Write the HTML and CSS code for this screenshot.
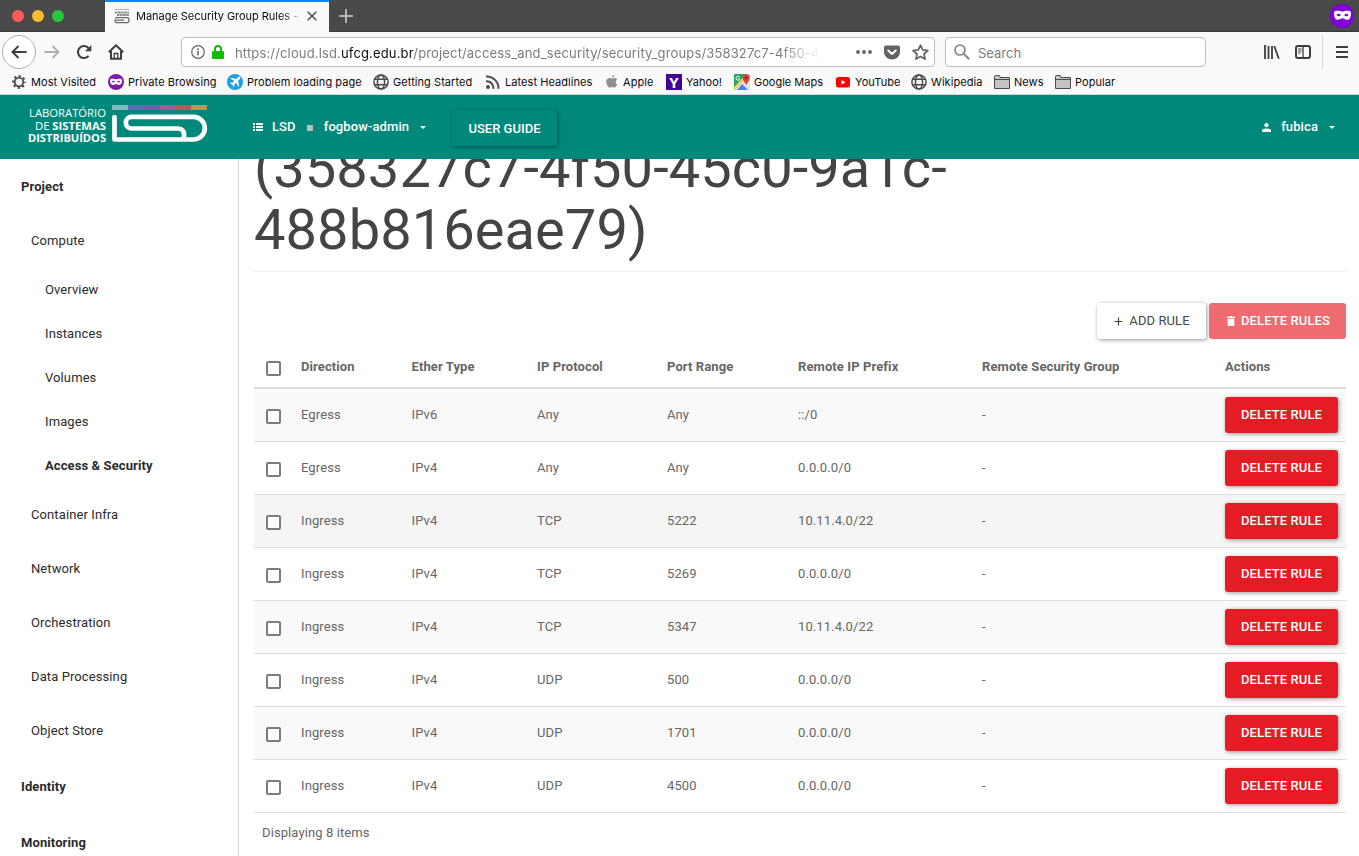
FILE: index.html
```html
<!DOCTYPE html>
<html lang="en">
<head>
<meta charset="utf-8">
<title>Manage Security Group Rules</title>
<link rel="stylesheet" href="styles.css">
</head>
<body>
<svg class="defs" width="0" height="0">
  <defs>
    <symbol id="mask" viewBox="0 0 16 16"><path fill="#fff" fill-rule="evenodd" d="M0 5.800C0 4 1.200 3.500 3.400 3.500 5.500 3.500 6.500 4.200 8 4.200S10.500 3.500 12.600 3.500C14.800 3.500 16 4 16 5.800 16 9.800 14.500 12 12.300 12 10.200 12 9.500 10.500 8 10.500S5.800 12 3.700 12C1.500 12 0 9.800 0 5.800zM2.300 7.500Q4.500 9.700 6.500 7.500 4.300 5.300 2.300 7.500zM9.500 7.500Q11.700 9.700 13.700 7.500 11.500 5.300 9.500 7.500z"/></symbol>
    <symbol id="globe" viewBox="0 0 16 16"><g fill="none" stroke="#4a4a4f" stroke-width="1.500"><circle cx="8" cy="8" r="7.100"/><ellipse cx="8" cy="8" rx="3.600" ry="7.100"/><path d="M1.500 5.300h13M1.500 10.700h13"/></g></symbol>
    <symbol id="folder" viewBox="0 0 16 14"><path d="M.5 13.500V1.500q0-1 1-1h3.500q1 0 1 2h9.500v11z" fill="#c4c4c4" stroke="#4a4a4f"/><path d="M.5 4.500h15" stroke="#4a4a4f"/></symbol>
  </defs>
</svg>
<div class="browser">
  <div class="tabs">
    <div class="lights"><i class="red"></i><i class="yellow"></i><i class="green"></i></div>
    <div class="tab">
      <svg width="16" height="16" viewBox="0 0 16 16"><g fill="none" stroke="#a0a0a0"><path d="M1 1.500h14" stroke-dasharray="2 .5"/><path d="M1 4.500h14M3 7h12" stroke-width="2" stroke-dasharray="2.500 .6" stroke="#8a8a8a"/><path d="M1 9.700h12q2 0 2 2.500t-2 2.500H3q-2 0-2-2.500h9" stroke="#6a6a6a" stroke-width="1.200"/></g></svg>
      <span class="tab-title">Manage Security Group Rules -</span>
      <svg width="10" height="10" viewBox="0 0 10 10"><path d="M.7.7l8.600 8.600M9.300.7L.7 9.300" stroke="#4a4a4f" stroke-width="1.400"/></svg>
    </div>
    <svg class="newtab" width="14" height="14" viewBox="0 0 14 14"><path d="M7 0v14M0 7h14" stroke="#d0d0d0" stroke-width="1.600"/></svg>
    <span class="private"><svg width="17" height="17"><use href="#mask"/></svg></span>
  </div>
  <div class="nav">
    <span class="back"><svg width="16" height="14" viewBox="0 0 16 14"><path d="M7.500 1L1.500 7l6 6M1.500 7H15.500" fill="none" stroke="#3e3e42" stroke-width="2"/></svg></span>
    <svg class="fwd" width="16" height="14" viewBox="0 0 16 14"><path d="M8.500 1l6 6-6 6M14.500 7H.5" fill="none" stroke="#b0b0b0" stroke-width="1.800"/></svg>
    <svg class="reload" width="16" height="16" viewBox="0 0 16 16"><path d="M12.600 11.800A6 6 0 1 1 12.500 4.100" fill="none" stroke="#3e3e42" stroke-width="2.100"/><path d="M15.300 1v6.300H9z" fill="#3e3e42"/></svg>
    <svg class="home" width="16" height="16" viewBox="0 0 16 16"><path d="M.7 8.300L8 1.300l7.300 7M3 7v7.700h10V7" fill="none" stroke="#3e3e42" stroke-width="2"/><path d="M6.200 14V9.500h3.600V14" fill="none" stroke="#3e3e42" stroke-width="1.300"/></svg>
    <div class="field url">
      <svg class="info" width="14" height="14" viewBox="0 0 14 14"><circle cx="7" cy="7" r="6.300" fill="none" stroke="#666" stroke-width="1.200"/><path d="M7 6v4.500M7 3.200v1.700" stroke="#666" stroke-width="1.600"/></svg>
      <svg class="lock" width="12" height="14" viewBox="0 0 12 14"><rect y="6" width="12" height="8" rx="1.200" fill="#12bc00"/><path d="M3 7V4a3 3 0 0 1 6 0v3" fill="none" stroke="#12bc00" stroke-width="2"/></svg>
      <span class="address">https://cloud.lsd.<b>ufcg.edu.br</b>/project/access_and_security/security_groups/358327c7-4f50-4</span>
      <svg class="dots" width="16" height="4" viewBox="0 0 16 4"><g fill="#636366"><circle cx="2" cy="2" r="1.900"/><circle cx="8" cy="2" r="1.900"/><circle cx="14" cy="2" r="1.900"/></g></svg>
      <svg class="pocket" width="16" height="15" viewBox="0 0 16 15"><path d="M2 .5h12q2 0 2 2V7a8 7.600 0 0 1-16 0V2.500q0-2 2-2z" fill="#636366"/><path d="M4.300 5.500L8 9l3.700-3.500" fill="none" stroke="#fff" stroke-width="2" stroke-linecap="round" stroke-linejoin="round"/></svg>
      <svg class="star" width="17" height="16" viewBox="0 0 17 16"><path d="M8.500 1.200l2.200 4.700 5.200.6-3.900 3.500 1.100 5.100-4.600-2.600-4.600 2.600L5 10 1.100 6.500l5.200-.6z" fill="none" stroke="#636366" stroke-width="1.700" stroke-linejoin="round"/></svg>
    </div>
    <div class="field search">
      <svg width="16" height="16" viewBox="0 0 16 16"><circle cx="6" cy="6" r="5" fill="none" stroke="#858585" stroke-width="1.700"/><path d="M9.600 9.600l5.600 5.600" stroke="#858585" stroke-width="2"/></svg>
      <span>Search</span>
    </div>
    <svg class="library" width="16" height="14" viewBox="0 0 16 14"><path d="M1 0v14M4.500 1v13M8 1v13M10.300 1l4.500 12.700" stroke="#3e3e42" stroke-width="1.800"/></svg>
    <svg class="panel" width="16" height="14" viewBox="0 0 16 14"><rect x="1" y="1" width="14" height="12" rx="2" fill="none" stroke="#3e3e42" stroke-width="2"/><path d="M8 1v12" stroke="#3e3e42" stroke-width="1.300"/><path d="M3 4h3.500M3 6h3.500M3 8h2.500" stroke="#3e3e42"/></svg>
    <span class="sep"></span>
    <svg class="menu" width="12" height="12" viewBox="0 0 12 12"><path d="M0 1h12M0 6h12M0 11h12" stroke="#3e3e42" stroke-width="1.800"/></svg>
  </div>
  <div class="bookmarks">
    <span class="bm"><svg width="16" height="16" viewBox="0 0 16 16"><circle cx="8" cy="8" r="5.900" fill="none" stroke="#4a4a4f" stroke-width="2" stroke-dasharray="2.200 2.434" stroke-dashoffset="1.100"/><circle cx="8" cy="8" r="4.300" fill="none" stroke="#4a4a4f" stroke-width="1.700"/></svg>Most Visited</span>
    <span class="bm"><i class="round purple"><svg width="12" height="12"><use href="#mask"/></svg></i>Private Browsing</span>
    <span class="bm"><i class="round blue"><svg width="12" height="12" viewBox="0 0 12 12"><path d="M11.500.5q-1.500-.4-2.800.9L7.200 2.900 2 1.800l-.8.8 4 2.300L3.300 6.800l-1.600-.3-.7.7 2.200 1.600L4.800 11l.7-.7-.3-1.600 1.900-1.900 2.300 4 .8-.8-1.100-5.200 1.500-1.500Q11.900 2 11.500.5z" fill="#fff"/></svg></i>Problem loading page</span>
    <span class="bm"><svg width="16" height="16"><use href="#globe"/></svg>Getting Started</span>
    <span class="bm"><svg width="16" height="16" viewBox="0 0 16 16"><circle cx="3" cy="13" r="2" fill="#4a4a4f"/><path d="M1 7.200a7 7 0 0 1 7.500 7.600M1 2.400A12 12 0 0 1 13.500 14.800" fill="none" stroke="#4a4a4f" stroke-width="2"/></svg>Latest Headlines</span>
    <span class="bm"><svg width="15" height="16" viewBox="0 0 15 16"><path d="M11.700 8q0-1.600 1.500-2.500-1-1.500-2.600-1.400-1 0-2.600.7Q6.600 4.100 5.600 4.100q-3.700.4-3.400 4.200.3 2.800 2.500 5 .7.500 1.500.1 1.600-.7 3.300 0 1 .4 1.600-.2Q12.500 12 13.200 10.500 11.700 9.800 11.700 8zM7.700 3.800Q7.800 1.500 10.200.7 10.300 3.300 7.700 3.800z" fill="#909090"/></svg>Apple</span>
    <span class="bm"><i class="yahoo">Y</i>Yahoo!</span>
    <span class="bm maps"><svg width="16" height="16" viewBox="0 0 16 16"><path d="M0 0h16v16H0z" fill="#e4e4e4"/><path d="M0 0h12L0 14z" fill="#26a565"/><path d="M0 13L13 0h1L1 16H0z" fill="#f7cb4d"/><path d="M3 16l5-6 6 6z" fill="#4285f4"/><path d="M12.200 0a3.600 3.600 0 0 1 3.600 3.800q0 2.300-3.600 7-3.600-4.700-3.600-7A3.600 3.600 0 0 1 12.200 0z" fill="#dc4437"/><circle cx="12.200" cy="3.700" r="1.300" fill="#7d2820"/><path d="M5.800 3.200A2 2 0 1 0 6 5H4.200" fill="none" stroke="#fff"/></svg>Google Maps</span>
    <span class="bm"><svg width="16" height="16" viewBox="0 0 16 16"><rect x="1" y="3" width="14" height="10.500" rx="2.500" fill="#f00"/><path d="M6.500 6v4.500l4-2.250z" fill="#fff"/></svg>YouTube</span>
    <span class="bm"><svg width="16" height="16"><use href="#globe"/></svg>Wikipedia</span>
    <span class="bm"><svg width="16" height="14"><use href="#folder"/></svg>News</span>
    <span class="bm"><svg width="16" height="14"><use href="#folder"/></svg>Popular</span>
  </div>
</div>

<header class="topbar">
  <svg class="logo" width="182" height="42" viewBox="0 0 182 42">
    <g fill="#fff" class="logo-text">
      <text x="3" y="14" textLength="77" lengthAdjust="spacingAndGlyphs">LABORATÓRIO</text>
      <text x="9" y="26.500" textLength="71" lengthAdjust="spacingAndGlyphs">DE <tspan class="heavy">SISTEMAS</tspan></text>
      <text x="2" y="39" textLength="78" lengthAdjust="spacingAndGlyphs" class="heavy">DISTRIBUÍDOS</text>
    </g>
    <path d="M86 2h16v5H86z" fill="#7fbbbb"/><path d="M102 2h16v5h-16z" fill="#5570b2"/><path d="M118 2h16v5h-16z" fill="#6864a8"/><path d="M134 2h15v5h-15z" fill="#99629b"/><path d="M149 2h16v5h-16z" fill="#c15161"/><path d="M165 2h16v5h-16z" fill="#c88e52"/>
    <path d="M88.500 14V36.500H167.500A11.300 11.300 0 0 0 167.500 13.900H105.500A5.700 5.800 0 0 0 105.500 25.500H152Q160 26 157.500 36" fill="none" stroke="#fff" stroke-width="4.700" stroke-linecap="round" stroke-linejoin="round"/>
  </svg>
  <div class="project-menu">
    <svg width="10" height="8" viewBox="0 0 10 8"><path d="M0 0h2v2H0zM3 0h7v2H3zM0 3h2v2H0zM3 3h7v2H3zM0 6h2v2H0zM3 6h7v2H3z" fill="#fff"/></svg>
    <span class="domain">LSD</span><i class="square"></i><span class="proj">fogbow-admin</span><i class="caret"></i>
  </div>
  <a class="guide">USER GUIDE</a>
  <div class="user-menu">
    <svg width="9" height="9" viewBox="0 0 9 9"><circle cx="4.500" cy="2.200" r="2.100" fill="#fff"/><path d="M0 9V7.500Q0 5.500 4.500 5.500T9 7.500V9z" fill="#fff"/></svg>
    <span>fubica</span><i class="caret"></i>
  </div>
</header>

<div class="page">
  <nav class="sidebar">
    <a class="top">Project</a>
    <a class="group">Compute</a>
    <a class="leaf">Overview</a>
    <a class="leaf">Instances</a>
    <a class="leaf">Volumes</a>
    <a class="leaf">Images</a>
    <a class="leaf active">Access &amp; Security</a>
    <a class="group">Container Infra</a>
    <a class="group">Network</a>
    <a class="group">Orchestration</a>
    <a class="group">Data Processing</a>
    <a class="group">Object Store</a>
    <a class="top tall">Identity</a>
    <a class="top tall">Monitoring</a>
  </nav>
  <main class="content">
    <h1>(358327c7-4f50-45c0-9a1c-<br>488b816eae79)</h1>
    <div class="actions">
      <a class="btn add"><svg width="9" height="9" viewBox="0 0 9 9"><path d="M4.500.5v8M.5 4.500h8" stroke="#444" stroke-width="1.200"/></svg>ADD RULE</a>
      <a class="btn delete-all"><svg width="8" height="10" viewBox="0 0 8 10"><path d="M0 .7h2.300L3 0h2l.7.700H8V2H0zM.6 2.700h6.800V9q0 1-1 1H1.600q-1 0-1-1z" fill="#fff"/></svg>DELETE RULES</a>
    </div>
    <table class="rules">
      <colgroup><col class="c1"><col class="c2"><col class="c3"><col class="c4"><col class="c5"><col class="c6"><col class="c7"><col class="c8"></colgroup>
      <thead><tr><th><i class="check"></i></th><th>Direction</th><th>Ether Type</th><th>IP Protocol</th><th>Port Range</th><th>Remote IP Prefix</th><th>Remote Security Group</th><th>Actions</th></tr></thead>
      <tbody>
        <tr><td><i class="check"></i></td><td>Egress</td><td>IPv6</td><td>Any</td><td>Any</td><td>::/0</td><td>-</td><td><a class="btn delete">DELETE RULE</a></td></tr>
        <tr><td><i class="check"></i></td><td>Egress</td><td>IPv4</td><td>Any</td><td>Any</td><td>0.0.0.0/0</td><td>-</td><td><a class="btn delete">DELETE RULE</a></td></tr>
        <tr class="hovered"><td><i class="check"></i></td><td>Ingress</td><td>IPv4</td><td>TCP</td><td>5222</td><td>10.11.4.0/22</td><td>-</td><td><a class="btn delete">DELETE RULE</a></td></tr>
        <tr><td><i class="check"></i></td><td>Ingress</td><td>IPv4</td><td>TCP</td><td>5269</td><td>0.0.0.0/0</td><td>-</td><td><a class="btn delete">DELETE RULE</a></td></tr>
        <tr><td><i class="check"></i></td><td>Ingress</td><td>IPv4</td><td>TCP</td><td>5347</td><td>10.11.4.0/22</td><td>-</td><td><a class="btn delete">DELETE RULE</a></td></tr>
        <tr><td><i class="check"></i></td><td>Ingress</td><td>IPv4</td><td>UDP</td><td>500</td><td>0.0.0.0/0</td><td>-</td><td><a class="btn delete">DELETE RULE</a></td></tr>
        <tr><td><i class="check"></i></td><td>Ingress</td><td>IPv4</td><td>UDP</td><td>1701</td><td>0.0.0.0/0</td><td>-</td><td><a class="btn delete">DELETE RULE</a></td></tr>
        <tr><td><i class="check"></i></td><td>Ingress</td><td>IPv4</td><td>UDP</td><td>4500</td><td>0.0.0.0/0</td><td>-</td><td><a class="btn delete">DELETE RULE</a></td></tr>
      </tbody>
    </table>
    <div class="count">Displaying 8 items</div>
  </main>
</div>
</body>
</html>
```

FILE: styles.css
```css
* { box-sizing: border-box; }
body { margin: 0; height: 856px; overflow: hidden; display: flex; flex-direction: column; background: #fff; font: 13px/20px Roboto, sans-serif; letter-spacing: .1px; color: #666; }
svg, i { display: block; flex: none; }
i { font-style: normal; }
.defs { position: absolute; }

.browser { flex: none; height: 95px; background: #f9f9fa; border-bottom: 1px solid #d5d5d5; font-family: Inter, sans-serif; letter-spacing: 0; color: #0c0c0d; }
.tabs { height: 32px; display: flex; align-items: center; background: #494949; border-bottom: 1px solid #383838; }
.lights { width: 105px; padding-left: 12px; display: flex; gap: 8px; }
.lights i { width: 12px; height: 12px; border-radius: 50%; }
.red { background: #fc5b57; }
.yellow { background: #fdbc2e; }
.green { background: #27c83f; }
.tab { width: 224px; height: 32px; align-self: flex-start; display: flex; align-items: center; padding: 0 12px 2px 9px; background: #f9f9fa; border-top: 2px solid #0a84ff; }
.tab-title { width: 163px; margin: 0 8px 0 6px; overflow: hidden; white-space: nowrap; font-size: 11px; letter-spacing: -.03px; -webkit-mask-image: linear-gradient(90deg, #000 145px, transparent 168px); mask-image: linear-gradient(90deg, #000 145px, transparent 168px); }
.newtab { margin-left: 10px; }
.private { margin: 0 5px 0 auto; width: 24px; height: 24px; border-radius: 50%; background: #8000d7; display: flex; align-items: center; justify-content: center; }
.nav { height: 40px; display: flex; align-items: center; padding-left: 2px; }
.back { width: 34px; height: 34px; border: 1px solid #b1b1b1; border-radius: 50%; background: #fff; display: flex; align-items: center; justify-content: center; }
.fwd { margin-left: 8px; }
.reload { margin-left: 16px; }
.home { margin-left: 16px; }
.field { height: 30px; display: flex; align-items: center; background: #fff; border: 1px solid #bcbcbc; border-radius: 4px; font-size: 13px; color: #7c7c80; }
.field span { padding-top: 2px; }
.url { width: 754px; margin-left: 57px; padding-left: 9px; }
.lock { margin-left: 7px; }
.address { width: 586px; margin-left: 11px; overflow: hidden; white-space: nowrap; letter-spacing: .15px; -webkit-mask-image: linear-gradient(90deg, #000 545px, transparent 586px); mask-image: linear-gradient(90deg, #000 545px, transparent 586px); }
.address b { font-weight: 400; color: #0c0c0d; }
.dots { margin-left: 35px; }
.pocket { margin-left: 12px; }
.star { margin-left: 12px; }
.search { width: 261px; margin-left: 10px; padding-left: 8px; gap: 8px; }
.library { margin-left: 58px; }
.panel { margin-left: 15px; }
.sep { width: 1px; height: 34px; margin-left: 11px; background: #d7d7db; }
.menu { margin-left: 13px; }
.bookmarks { height: 20px; padding-left: 11px; display: grid; grid-template-columns: 97px 119px 146px 112px 119px 62px 68px 101px 76px 83px 61px 80px; align-items: center; font-size: 11px; white-space: nowrap; }
.bm { display: flex; align-items: center; gap: 4px; letter-spacing: .06px; }
.maps { letter-spacing: 0; }
.round { width: 16px; height: 16px; border-radius: 50%; display: flex; align-items: center; justify-content: center; }
.purple { background: #8018a8; }
.blue { background: #1c9be6; }
.yahoo { width: 16px; height: 16px; background: #430297; color: #fff; font: 700 15px/17px "Open Sans", sans-serif; text-align: center; }

.topbar { flex: none; height: 64px; display: flex; align-items: center; background: #00897b; color: #fff; font-weight: 500; }
.logo { margin: -6px 0 0 26px; }
.logo-text { font: 400 11px "Open Sans", sans-serif; letter-spacing: 0; }
.heavy { font-weight: 700; }
.project-menu { display: flex; align-items: center; margin-left: 45px; width: 199px; }
.domain { margin-left: 9px; }
.square { width: 6px; height: 6px; background: #b9c1bf; margin: 2px 11px 0 11px; }
.caret { border: 3px solid transparent; border-top-color: #fff; border-bottom: 0; margin-left: 11px; }
.guide { height: 36px; width: 105px; border-radius: 3px; text-align: center; line-height: 37px; box-shadow: 1px 1px 4px rgba(0,0,0,.4); letter-spacing: .02px; margin-top: 2px; }
.user-menu { display: flex; align-items: center; margin: 0 24px 0 auto; }
.user-menu span { margin-left: 10px; }

.page { flex: 1; min-height: 0; display: flex; overflow: hidden; }
.sidebar { flex: none; width: 239px; padding-top: 1px; border-right: 1px solid #d8d8d8; display: flex; flex-direction: column; color: #2b2b2b; }
.sidebar a { flex: none; display: flex; align-items: center; }
.top { height: 54px; padding-left: 21px; font-weight: 700; }
.tall { height: 56px; padding-top: 2px; }
.group { height: 54px; padding-left: 31px; }
.leaf { height: 44px; padding-left: 45px; }
.active { font-weight: 700; }
.content { width: 1092px; margin-left: 15px; }
h1 { margin: -21px 0 0; height: 133.500px; border-bottom: 1px solid #eee; font-size: 56px; line-height: 61.600px; font-weight: 400; letter-spacing: .07px; color: #444; white-space: nowrap; }
.actions { display: flex; justify-content: flex-end; gap: 3px; margin-top: 31.500px; }
.btn { display: flex; align-items: center; justify-content: center; height: 36px; border-radius: 3px; font-weight: 500; letter-spacing: .1px; white-space: nowrap; color: #fff; }
.add { width: 109px; gap: 6px; padding-left: 1px; color: #444; font-weight: 400; box-shadow: 1px 1px 4px rgba(0,0,0,.4); }
.delete-all { width: 137px; gap: 6px; padding-left: 2px; background: #ef6b70; }
.delete { width: 113px; background: #e51c23; box-shadow: 1px 1px 4px rgba(0,0,0,.4); }
.rules { width: 1092px; table-layout: fixed; border-collapse: separate; border-spacing: 0; margin-top: 6px; }
.c1 { width: 39px; } .c2 { width: 110.500px; } .c3 { width: 125.500px; } .c4 { width: 130px; } .c5 { width: 131px; } .c6 { width: 184px; } .c7 { width: 243px; } .c8 { width: 129px; }
th, td { padding: 0 8px; text-align: left; vertical-align: middle; }
th { height: 44px; padding-top: 2px; border-bottom: 2px solid #ddd; font-weight: 700; }
td { height: 53px; border-bottom: 1px solid #ddd; }
tbody tr:nth-child(odd) { background: #f9f9f9; }
tbody tr.hovered { background: #f5f5f5; }
.check { width: 15px; height: 15px; margin: 3px 0 0 4px; border: 2px solid #7c7c7c; border-radius: 2px; background: #fff; }
.count { padding: 10px 8px; }
```
